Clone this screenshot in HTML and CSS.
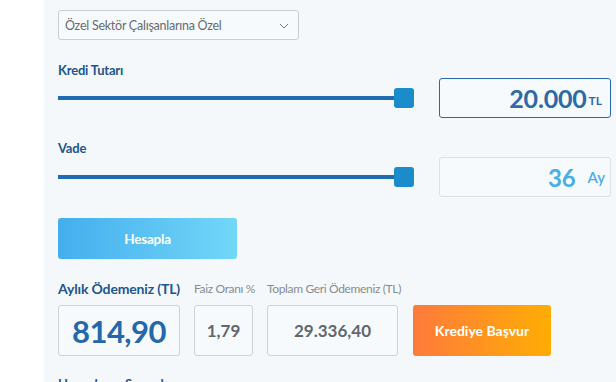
FILE: index.html
```html
<!DOCTYPE html>
<html lang="tr">
<head>
<meta charset="utf-8">
<link rel="stylesheet" href="styles.css">
</head>
<body>
<div class="page">
  <div class="gutter"></div>
  <div class="panel">
    <div class="select">
      <span>Özel Sektör Çalışanlarına Özel</span>
      <svg class="chev" width="10" height="6" viewBox="0 0 10 6"><path d="M1 1 L5 5 L9 1" fill="none" stroke="#777" stroke-width="1"/></svg>
    </div>

    <div class="label lbl-amount">Kredi Tutarı</div>
    <div class="row">
      <div class="slider"><div class="track"></div><div class="thumb"></div></div>
      <div class="field active"><span class="num">20.000</span><span class="unit tl">TL</span></div>
    </div>

    <div class="label lbl-term">Vade</div>
    <div class="row">
      <div class="slider"><div class="track"></div><div class="thumb"></div></div>
      <div class="field"><span class="num light">36</span><span class="unit ay">Ay</span></div>
    </div>

    <button class="btn-calc">Hesapla</button>

    <div class="results">
      <div class="col c1">
        <div class="rlabel main">Aylık Ödemeniz (TL)</div>
        <div class="box big">814,90</div>
      </div>
      <div class="col c2">
        <div class="rlabel">Faiz Oranı %</div>
        <div class="box small">1,79</div>
      </div>
      <div class="col c3">
        <div class="rlabel">Toplam Geri Ödemeniz (TL)</div>
        <div class="box small">29.336,40</div>
      </div>
      <div class="col c4">
        <button class="btn-apply">Krediye Başvur</button>
      </div>
    </div>

    <div class="more">Hesaplama Sonuçları</div>
  </div>
</div>
</body>
</html>
```

FILE: styles.css
```css
* { box-sizing: border-box; }
html, body { margin: 0; padding: 0; background: #ffffff; }
body { font-family: Lato, "Open Sans", sans-serif; width: 616px; height: 382px; overflow: hidden; }

.page { display: flex; height: 382px; }
.gutter { width: 44px; flex: none; background: #ffffff; }
.panel { flex: 1; background: #f4f8fb; padding: 10px 0 0 14px; }

.select {
  width: 241px; height: 30px;
  border: 1px solid #c9ced3; border-radius: 3px;
  display: flex; align-items: center; justify-content: space-between;
  padding: 0 9px 0 6px;
  font-size: 12.5px; letter-spacing: -0.25px; color: #666b70; background: #f7fafc;
}
.chev { margin-top: 1px; }

.label { font-size: 13px; font-weight: 700; color: #22558c; line-height: 16px; letter-spacing: -0.2px; }
.lbl-amount { margin-top: 22px; }
.lbl-term { margin-top: 22px; }

.row { display: flex; align-items: center; height: 40px; }
.lbl-term + .row { margin-top: 1px; }

.slider { width: 356px; display: flex; align-items: center; }
.track { flex: 1; height: 4px; background: #1f6db0; margin-right: -1px; }
.thumb { width: 20px; height: 20px; background: #1b8ccb; border-radius: 3px; }

.field {
  margin-left: 25px; width: 172px; height: 40px;
  border: 1px solid #dde1e5; border-radius: 3px; background: #f7fafc;
  display: flex; align-items: center; justify-content: flex-end;
  padding-right: 8px;
}
.field.active { border: 1.5px solid #2b69a6; }
.num { font-size: 25px; font-weight: 700; color: #2c6aa8; letter-spacing: -0.2px; }
.num.light { color: #4aaee6; font-size: 24px; }
.unit { font-weight: 700; }
.unit.tl { font-size: 12px; color: #2c6aa8; margin-left: 2px; margin-top: 4px; }
.unit.ay { font-size: 15px; color: #4aaee6; margin-left: 12px; margin-right: -3px; font-weight: 600; }

.btn-calc {
  display: block; margin-top: 21px;
  width: 179px; height: 41px; border: 0; border-radius: 3px;
  background: linear-gradient(90deg, #44aeee, #72d7f8);
  color: #fff; font-family: inherit; font-size: 13.5px; font-weight: 700; letter-spacing: -0.2px;
}

.results { display: flex; margin-top: 22px; align-items: flex-end; }
.col { display: flex; flex-direction: column; }
.c1 { width: 122px; }
.c2 { width: 59px; margin-left: 14px; }
.c3 { width: 131px; margin-left: 14px; }
.c4 { margin-left: 15px; }
.rlabel { height: 16px; line-height: 16px; font-size: 12px; color: #878c91; white-space: nowrap; margin-bottom: 8px; letter-spacing: -0.35px; }
.rlabel.main { font-size: 14px; font-weight: 700; color: #22558c; letter-spacing: -0.15px; }
.box {
  height: 51px; border: 1px solid #cdd2d6; border-radius: 3px; background: #f7fafc;
  display: flex; align-items: center; justify-content: center;
}
.box.big { font-size: 31px; font-weight: 700; color: #2468ab; letter-spacing: -0.5px; }
.box.small { font-size: 17px; font-weight: 700; color: #62676c; }
.btn-apply {
  width: 138px; height: 51px; border: 0; border-radius: 3px;
  background: linear-gradient(90deg, #fe7a3c, #ffad04);
  color: #fff; font-family: inherit; font-size: 14px; font-weight: 700;
}

.more { margin-top: 20px; font-size: 13px; font-weight: 700; color: #22558c; }
```
